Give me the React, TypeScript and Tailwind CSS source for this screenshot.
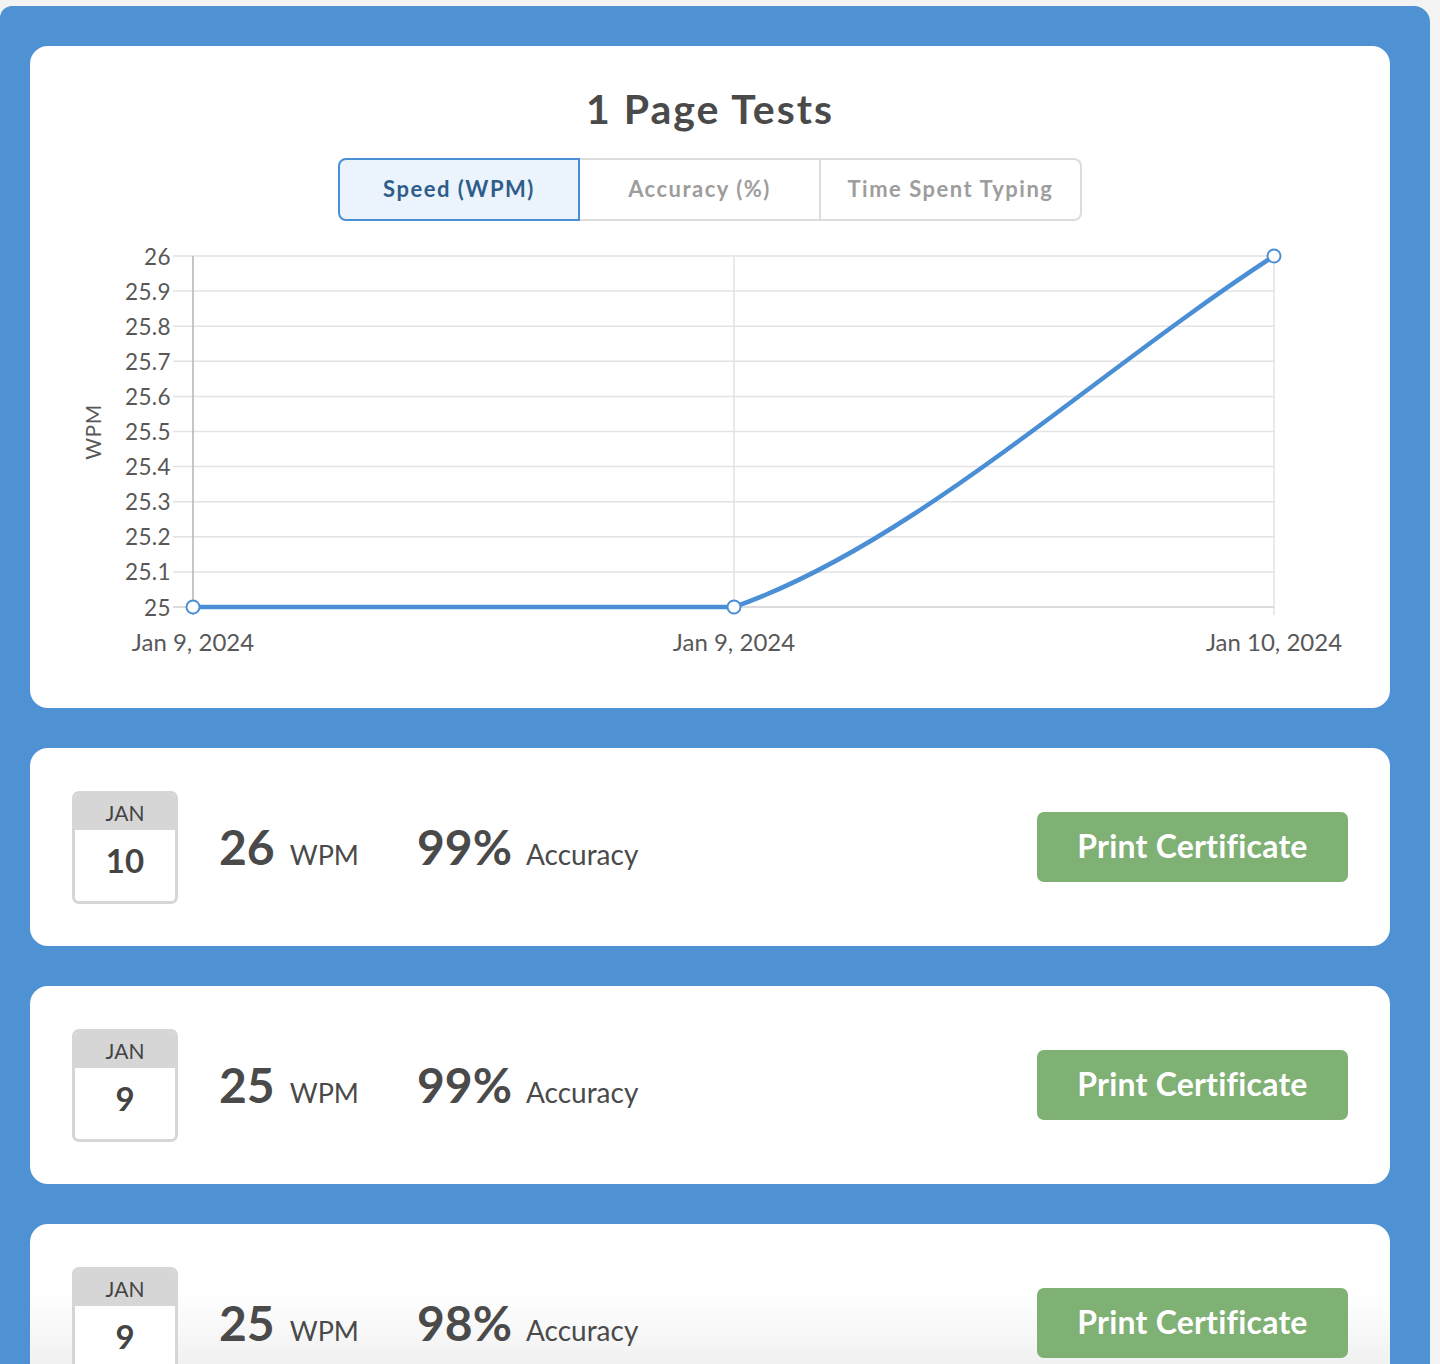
import React from 'react';

interface TestResult {
  month: string;
  day: string;
  wpm: number;
  accuracy: number;
}

const results: TestResult[] = [
  { month: 'JAN', day: '10', wpm: 26, accuracy: 99 },
  { month: 'JAN', day: '9', wpm: 25, accuracy: 99 },
  { month: 'JAN', day: '9', wpm: 25, accuracy: 98 },
];

const tabs = [
  { label: 'Speed (WPM)', width: 'w-[242px]' },
  { label: 'Accuracy (%)', width: 'w-[241px]' },
  { label: 'Time Spent Typing', width: 'w-[261px]' },
];

// chart coords are relative to the card (x) and to the top of the svg (y)
const yTicks = Array.from({ length: 11 }, (_, i) => ({
  y: 386 - i * 35.1,
  label: i === 0 ? '25' : i === 10 ? '26' : (25 + i / 10).toFixed(1),
}));

const xTicks = [
  { x: 163, label: 'Jan 9, 2024' },
  { x: 704, label: 'Jan 9, 2024' },
  { x: 1244, label: 'Jan 10, 2024' },
];

const SpeedChart: React.FC = () => (
  <svg width="1360" height="487" viewBox="0 0 1360 487" className="block">
    {yTicks.map((t, i) => (
      <g key={i}>
        <line
          x1={143}
          x2={1245}
          y1={t.y}
          y2={t.y}
          stroke={i === 0 ? '#cfcfcf' : '#e3e3e3'}
          strokeWidth={1.5}
        />
        <text
          x={141}
          y={t.y}
          textAnchor="end"
          dominantBaseline="central"
          fontSize={22.5}
          letterSpacing={0.4}
          fill="#585858"
          fontFamily="Lato, sans-serif"
        >
          {t.label}
        </text>
      </g>
    ))}
    <line x1={704} x2={704} y1={35} y2={394} stroke="#e3e3e3" strokeWidth={1.5} />
    <line x1={1244} x2={1244} y1={35} y2={394} stroke="#e3e3e3" strokeWidth={1.5} />
    <line x1={163} x2={163} y1={35} y2={394} stroke="#b3b3b3" strokeWidth={1.5} />
    {xTicks.map((t, i) => (
      <text
        key={i}
        x={t.x}
        y={420}
        textAnchor="middle"
        dominantBaseline="central"
        fontSize={24}
        fill="#585858"
        fontFamily="Lato, sans-serif"
      >
        {t.label}
      </text>
    ))}
    <text
      x={62}
      y={211}
      transform="rotate(-90 62 211)"
      textAnchor="middle"
      dominantBaseline="central"
      fontSize={21}
      letterSpacing={0.5}
      fill="#585858"
      fontFamily="Lato, sans-serif"
    >
      WPM
    </text>
    <path
      d="M163 386 L704 386 C884 323 1064 152 1244 35"
      fill="none"
      stroke="#4a8fd6"
      strokeWidth={4.5}
      strokeLinejoin="round"
    />
    {[
      [163, 386],
      [704, 386],
      [1244, 35],
    ].map(([cx, cy], i) => (
      <circle key={i} cx={cx} cy={cy} r={6.5} fill="#fff" stroke="#4a8fd6" strokeWidth={2} />
    ))}
  </svg>
);

const ResultCard: React.FC<{ result: TestResult; fade?: boolean }> = ({ result, fade }) => (
  <div
    className={`rounded-[18px] h-[198px] shrink-0 px-[42px] flex items-center justify-between ${
      fade ? 'bg-[linear-gradient(to_bottom,#ffffff_70px,#f1f1f1_140px,#f1f1f1)]' : 'bg-white'
    }`}
  >
    <div className="flex items-center">
      <div className="w-[106px] h-[113px] rounded-[7px] border-[3px] border-[#d6d6d6] overflow-hidden flex flex-col bg-white">
        <div className="h-[36px] bg-[#d6d6d6] flex items-center justify-center text-[21px] text-[#444] leading-none pt-[1px]">
          {result.month}
        </div>
        <div className="flex-1 flex items-start justify-center pt-[14px] text-[33px] font-bold text-[#444] leading-none">
          {result.day}
        </div>
      </div>
      <div className="ml-[41px] flex items-baseline text-[#4a4a4a]">
        <span className="text-[48px] font-bold leading-none">{result.wpm}</span>
        <span className="text-[27px] ml-[15px] leading-none">WPM</span>
        <span className="text-[48px] font-bold leading-none ml-[58px]">{result.accuracy}%</span>
        <span className="text-[28px] ml-[14px] leading-none">Accuracy</span>
      </div>
    </div>
    <button className="w-[311px] h-[70px] rounded-[7px] bg-[#7fb074] text-white text-[32px] font-bold tracking-[0.2px] leading-none pb-[2px]">
      Print Certificate
    </button>
  </div>
);

export default function App() {
  return (
    <div
      className="h-[1364px] overflow-hidden bg-[#f3f3f3] pt-[6px] pr-[10px]"
      style={{ fontFamily: 'Lato, "Open Sans", sans-serif' }}
    >
      <div className="bg-[#4f92d3] rounded-tr-[16px] rounded-tl-[12px] pl-[30px] pr-[40px] pt-[40px] pb-[40px] flex flex-col gap-[40px]">
        <div className="bg-white rounded-[18px] h-[662px] shrink-0 flex flex-col items-center pt-[38px]">
          <h1 className="text-[41px] font-bold tracking-[2px] text-[#4a4a4a] leading-[50px]">1 Page Tests</h1>
          <div className="flex mt-[24px] h-[63px]">
            {tabs.map((tab, i) => (
              <div
                key={tab.label}
                className={`${tab.width} flex items-center justify-center pb-[3px] text-[22px] font-bold tracking-[1.5px] ${
                  i === 0
                    ? 'border-2 border-[#4a8fd6] bg-[#ebf3fc] text-[#2f5d8a] rounded-l-[8px]'
                    : i === 1
                    ? 'border-y-2 border-r-2 border-[#dcdcdc] text-[#9d9d9d]'
                    : 'border-y-2 border-r-2 border-[#dcdcdc] text-[#9d9d9d] rounded-r-[8px]'
                }`}
              >
                {tab.label}
              </div>
            ))}
          </div>
          <div className="self-stretch">
            <SpeedChart />
          </div>
        </div>
        {results.map((r, i) => (
          <ResultCard key={i} result={r} fade={i === results.length - 1} />
        ))}
      </div>
    </div>
  );
}
